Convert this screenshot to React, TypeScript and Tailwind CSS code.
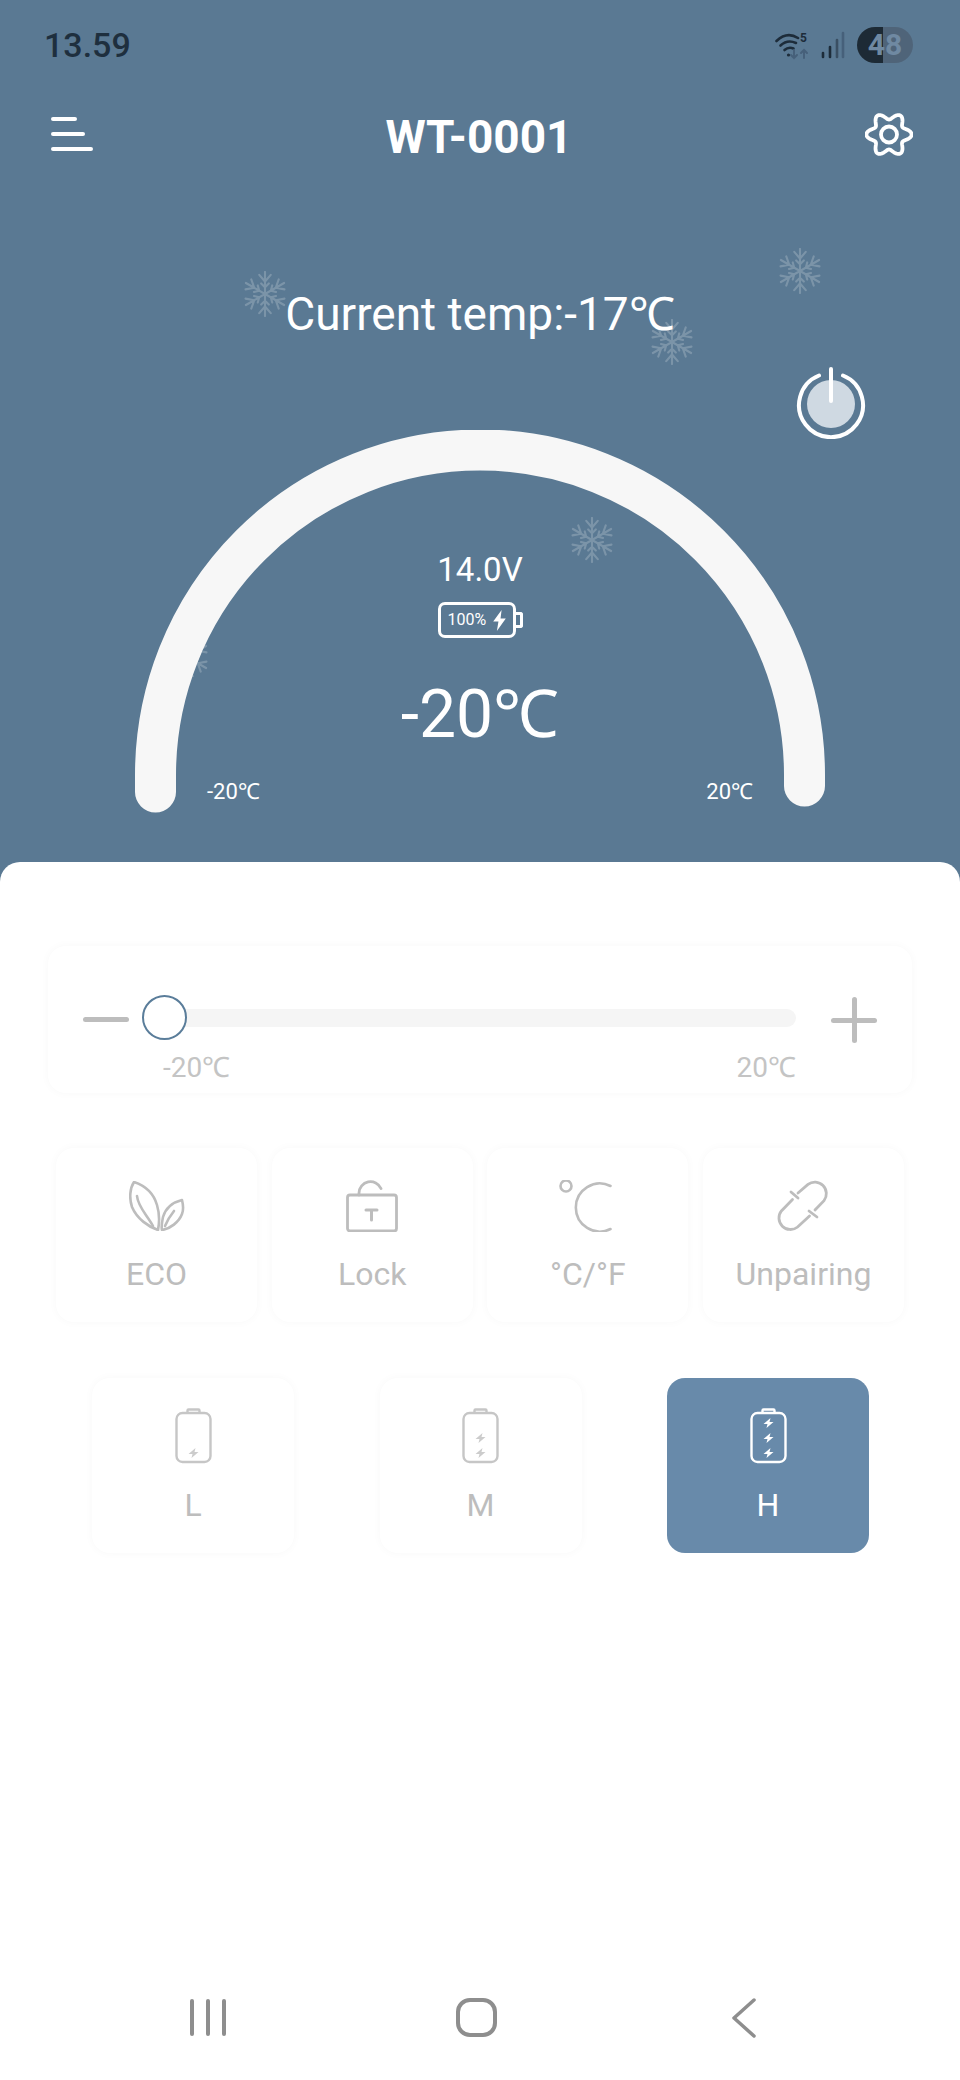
const gearPath = (() => {
  const pts: string[] = [];
  for (let i = 0; i <= 180; i++) {
    const t = (i / 180) * Math.PI * 2;
    const r = 19 + 3.6 * Math.cos(6 * t);
    pts.push(`${(24 + r * Math.cos(t)).toFixed(2)} ${(22.5 + r * 0.97 * Math.sin(t)).toFixed(2)}`);
  }
  return "M" + pts.join("L") + "Z";
})();

function Snowflake({ className }: { className: string }) {
  return (
    <svg viewBox="-24 -24 48 48" className={`absolute h-[46px] w-[46px] opacity-20 ${className}`} fill="none" stroke="#fff" strokeWidth="2.2" strokeLinecap="round">
      <path
        d={[0, 60, 120, 180, 240, 300]
          .map((a) => {
            const r = (a * Math.PI) / 180;
            const p = (x: number, y: number) => `${(x * Math.cos(r) - y * Math.sin(r)).toFixed(2)} ${(x * Math.sin(r) + y * Math.cos(r)).toFixed(2)}`;
            return `M0 0L${p(0, -23)}M${p(-6, -20)}L${p(0, -13)}L${p(6, -20)}M${p(-4, -11)}L${p(0, -7)}L${p(4, -11)}`;
          })
          .join("")}
      />
    </svg>
  );
}

function Bolt({ y, color }: { y: number; color: string }) {
  return <path transform={`translate(18.5 ${y})`} d="M2 -5L-5 1H-1L-2 5L5 -1H1Z" fill={color} />;
}

function BatteryLevel({ level, color, bolt }: { level: number; color: string; bolt: string }) {
  return (
    <svg viewBox="0 0 37 56" className="h-[56px] w-[37px]" fill="none" stroke={color} strokeWidth="2.4">
      <path d="M12.5 5V2.5Q12.5 1.5 13.5 1.5H23.5Q24.5 1.5 24.5 2.5V5" />
      <rect x="1.5" y="5" width="34" height="49" rx="6" />
      <g stroke="none">
        <Bolt y={45} color={bolt} />
        {level > 1 && <Bolt y={30} color={bolt} />}
        {level > 2 && <Bolt y={15} color={bolt} />}
      </g>
    </svg>
  );
}

const cardShadow = "bg-white rounded-[18px] shadow-[0_0_10px_rgba(0,0,0,0.03)]";

function ActionCard({ label, icon }: { label: string; icon: React.ReactNode }) {
  return (
    <div className={`flex h-[174px] flex-col items-center pt-[32px] ${cardShadow}`}>
      <div className="flex h-[52px] items-center justify-center">{icon}</div>
      <div className="mt-[24px] text-[32px] leading-[36px] text-[#bdbdbd]">{label}</div>
    </div>
  );
}

function LevelCard({ label, level, active }: { label: string; level: number; active?: boolean }) {
  return (
    <div className={`flex h-[175px] w-[202px] flex-col items-center pt-[30px] ${active ? "rounded-[18px] bg-[#688aaa]" : cardShadow}`}>
      <BatteryLevel level={level} color={active ? "#ffffff" : "#c6c6c6"} bolt={active ? "#ffffff" : "#cccccc"} />
      <div className={`mt-[23px] text-[32px] leading-[36px] ${active ? "text-white" : "text-[#bdbdbd]"}`}>{label}</div>
    </div>
  );
}

export default function App() {
  return (
    <div className="relative flex h-[2080px] w-[960px] flex-col overflow-hidden bg-[#5a7993] [font-family:Roboto,sans-serif]">
      <Snowflake className="left-[242px] top-[271px]" />
      <Snowflake className="left-[777px] top-[248px]" />
      <Snowflake className="left-[649px] top-[319px]" />
      <Snowflake className="left-[569px] top-[517px]" />
      <Snowflake className="left-[164px] top-[634px]" />

      <div className="relative flex h-[862px] flex-col">
        <div className="mx-[44px] mr-[47px] mt-[27px] flex h-[36px] items-center justify-between">
          <div className="text-[34px] font-medium leading-[36px] text-[#1e2f3e]">13.59</div>
          <div className="flex items-center">
            <svg viewBox="0 0 36 30" className="h-[30px] w-[36px]" fill="none" stroke="#1d2c3a" strokeWidth="2.6" strokeLinecap="round">
              <path d="M1.5 11Q12 1 23 8" />
              <path d="M5.5 15.5Q12.5 9 21 13" />
              <path d="M9.5 20Q13.5 16.5 18.5 18.5" />
              <circle cx="13.5" cy="25" r="1.6" fill="#1d2c3a" stroke="none" />
              <text x="25" y="12" fontSize="12" fontWeight="700" fill="#1d2c3a" stroke="none">5</text>
              <path d="M19 20V28M16 25L19 28L22 25" stroke="#46607a" strokeWidth="2" />
              <path d="M29 28V20M26 23L29 20L32 23" stroke="#46607a" strokeWidth="2" />
            </svg>
            <svg viewBox="0 0 24 28" className="ml-[10px] h-[28px] w-[24px]" fill="none" strokeWidth="2.6" strokeLinecap="round">
              <path d="M2 26V22" stroke="#1d2c3a" />
              <path d="M9 26V16" stroke="#1d2c3a" />
              <path d="M16 26V9" stroke="#3a4f63" />
              <path d="M22 26V2" stroke="#46607a" />
            </svg>
            <div className="ml-[12px] flex h-[36px] w-[56px] items-center justify-center rounded-full bg-[linear-gradient(90deg,#1d2a35_0%,#1d2a35_46%,#4f6479_46%,#4f6479_100%)] text-[30px] font-bold leading-[36px] text-[#6f89a2]">
              48
            </div>
          </div>
        </div>

        <div className="ml-[51px] mr-[47px] mt-[47px] flex h-[48px] items-center justify-between">
          <div className="flex w-[42px] flex-col gap-[11px]">
            <div className="h-[4px] w-[26px] rounded-full bg-white" />
            <div className="h-[4px] w-[34px] rounded-full bg-white" />
            <div className="h-[4px] w-[42px] rounded-full bg-white" />
          </div>
          <div className="translate-y-[3px] text-[46px] font-bold leading-[48px] text-white">WT-0001</div>
          <svg viewBox="0 0 48 45" className="h-[45px] w-[48px]" fill="none" stroke="#fff" strokeWidth="3.8">
            <path d={gearPath} strokeLinejoin="round" />
            <circle cx="24" cy="22.5" r="8" />
          </svg>
        </div>

        <div className="mt-[131px] h-[50px] text-center text-[46px] leading-[50px] text-white">Current temp:-17℃</div>

        <svg viewBox="0 0 70 72" className="absolute left-[796px] top-[367px] h-[72px] w-[70px]" fill="none">
          <circle cx="35" cy="37" r="24" fill="#cfd9e2" />
          <path d="M23 8.5A32 32 0 1 0 47 8.5" stroke="#fff" strokeWidth="4" strokeLinecap="round" />
          <path d="M35 2V34" stroke="#fff" strokeWidth="4" strokeLinecap="round" />
        </svg>

        <div className="relative mt-[91px] flex h-[390px] flex-col items-center text-white">
          <svg viewBox="0 0 960 390" className="absolute inset-0 h-[390px] w-[960px]" fill="none">
            <path d="M155.5 362V345A324.5 325 0 0 1 804.5 345V356" stroke="#f7f7f7" strokeWidth="41" strokeLinecap="round" />
          </svg>
          <div className="relative mt-[120px] text-[33px] leading-[40px]">14.0V</div>
          <div className="relative mt-[12px] flex h-[36px] w-[85px] items-center">
            <div className="flex h-[36px] w-[78px] items-center rounded-[7px] border-[3.5px] border-white pl-[7px] text-[16px] leading-[20px]">
              100%
              <svg viewBox="0 0 14 20" className="ml-[6px] h-[21px] w-[15px]">
                <path d="M9 0L1 11H6L4.500 20L13 8H8L9 0Z" fill="#fff" />
              </svg>
            </div>
            <div className="h-[16px] w-[7px] rounded-r-[3px] border-[3px] border-l-0 border-white" />
          </div>
          <div className="relative mt-[37px] text-[66px] leading-[80px]">-20℃</div>
          <div className="relative mt-[24px] flex w-[546px] justify-between text-[22px] leading-[26px]">
            <span>-20℃</span>
            <span>20℃</span>
          </div>
        </div>
      </div>

      <div className="flex flex-1 flex-col rounded-t-[20px] bg-white">
        <div className={`ml-[48px] mr-[48px] mt-[84px] h-[147px] px-[35px] pt-[49px] ${cardShadow}`}>
          <div className="flex h-[45px] items-center">
            <div className="mt-[4px] h-[5px] w-[46px] rounded-full bg-[#bdbdbd]" />
            <div className="relative ml-[13px] flex h-[45px] flex-1 items-center">
              <div className="ml-[22px] h-[18px] flex-1 rounded-full bg-[#f5f5f5]" />
              <div className="absolute left-0 top-0 h-[45px] w-[45px] rounded-full border-[2.5px] border-[#5a7d9a] bg-white" />
            </div>
            <div className="relative ml-[35px] h-[46px] w-[46px]">
              <div className="absolute left-0 top-[23px] h-[5px] w-[46px] rounded-full bg-[#bdbdbd]" />
              <div className="absolute left-[21px] top-[2px] h-[46px] w-[5px] rounded-full bg-[#bdbdbd]" />
            </div>
          </div>
          <div className="ml-[80px] mr-[81px] mt-[13px] flex justify-between text-[28px] leading-[30px] text-[#c4c4c4]">
            <span>-20℃</span>
            <span>20℃</span>
          </div>
        </div>

        <div className="mx-[56px] mt-[55px] grid grid-cols-4 gap-[14.6px]">
          <ActionCard
            label="ECO"
            icon={
              <svg viewBox="0 0 56 50" className="h-[50px] w-[56px]" fill="none" stroke="#bdbdbd" strokeWidth="2.6" strokeLinecap="round" strokeLinejoin="round">
                <path d="M5 1C14 4 24 10 28 24C31 34 30 44 29 49C20 46 8 38 3 26C0 17 1 7 5 1Z" />
                <path d="M53 19C45 21 37 26 34 36C33 41 32 46 33 49C41 48 50 41 53 33C55 28 54 23 53 19Z" />
                <path d="M8 15C9 26 18 34 24 45M45 30C41 35 38 40 36 45" />
              </svg>
            }
          />
          <ActionCard
            label="Lock"
            icon={
              <svg viewBox="0 0 52 52" className="h-[52px] w-[52px]" fill="none" stroke="#bdbdbd" strokeWidth="2.8" strokeLinecap="round" strokeLinejoin="round">
                <rect x="1.500" y="15" width="49" height="36" rx="2.500" />
                <path d="M13 15V13A11.500 11.500 0 0 1 35 8.500" />
                <path d="M20 30H31M25.500 30V40" strokeWidth="3" />
              </svg>
            }
          />
          <ActionCard
            label="°C/°F"
            icon={
              <svg viewBox="0 0 60 52" className="h-[52px] w-[60px]" fill="none" stroke="#bdbdbd" strokeWidth="2.6" strokeLinecap="round">
                <circle cx="8" cy="6" r="5.500" />
                <path d="M52.500 6A24 24 0 1 0 52.500 49" />
              </svg>
            }
          />
          <ActionCard
            label="Unpairing"
            icon={
              <svg viewBox="0 0 52 52" className="h-[52px] w-[52px]" fill="none" stroke="#bdbdbd" strokeWidth="2.8" strokeLinecap="round">
                <path d="M21 13L31 4.400A11.500 11.500 0 0 1 47 20.600L38 30" />
                <path d="M15.500 19.500L4.400 30.900A11.500 11.500 0 0 0 20.600 47L32.500 36" />
                <path d="M14 12L21 18M32 31L40 37" />
              </svg>
            }
          />
        </div>

        <div className="ml-[92px] mr-[91px] mt-[56px] flex justify-between">
          <LevelCard label="L" level={1} />
          <LevelCard label="M" level={2} />
          <LevelCard label="H" level={3} active />
        </div>

        <div className="mb-[43px] ml-[74px] mr-[82px] mt-auto grid grid-cols-3">
          <div className="flex h-[39px] items-center justify-center gap-[12.500px]">
            <div className="h-[37px] w-[3.500px] rounded-full bg-[#8e8e8e]" />
            <div className="h-[37px] w-[3.500px] rounded-full bg-[#8e8e8e]" />
            <div className="h-[37px] w-[3.500px] rounded-full bg-[#8e8e8e]" />
          </div>
          <div className="flex h-[39px] items-center justify-center">
            <div className="h-[39px] w-[41px] rounded-[14px] border-[4px] border-[#8e8e8e]" />
          </div>
          <div className="flex h-[39px] items-center justify-center">
            <svg viewBox="0 0 24 40" className="h-[40px] w-[24px]" fill="none" stroke="#8e8e8e" strokeWidth="3.500" strokeLinecap="round" strokeLinejoin="round">
              <path d="M22 2L2 20L22 38" />
            </svg>
          </div>
        </div>
      </div>
    </div>
  );
}
